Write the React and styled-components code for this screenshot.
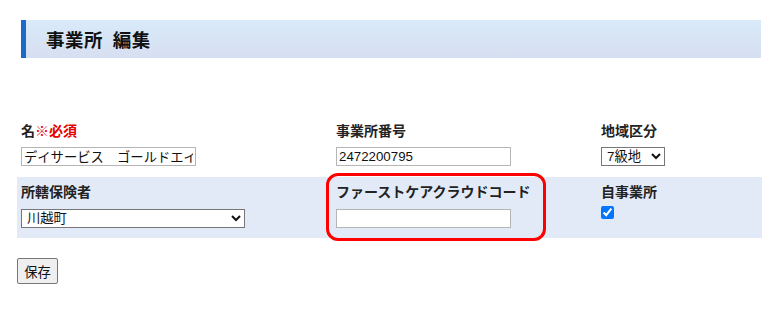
import React from "react";
import styled, { createGlobalStyle } from "styled-components";

const GlobalStyle = createGlobalStyle`
  body {
    margin: 0;
    background: #fff;
    font-family: "Noto Sans CJK JP", "Noto Sans", sans-serif;
    color: #222;
  }
`;

const Page = styled.div`
  padding: 20px 0 0 17px;
`;

const Heading = styled.h2`
  margin: 0 0 0 4px;
  width: 740px;
  height: 38px;
  box-sizing: border-box;
  border-left: 5px solid #1a6bcc;
  background: linear-gradient(to bottom, #d9eaf9, #d6dff1);
  padding-left: 20px;
  font-size: 18.5px;
  font-weight: 700;
  line-height: 38px;
  color: #111;
  letter-spacing: 0.5px;
  word-spacing: 5px;
`;

const Form = styled.div`
  margin-top: 58px;
  width: 745px;
`;

const Row = styled.div`
  display: grid;
  grid-template-columns: 315px 265px 165px;
  height: 61px;
  background: ${(p) => (p.$shaded ? "#e3eaf7" : "#fff")};
`;

const Cell = styled.div`
  position: relative;
  padding: 4px;
`;

const Label = styled.div`
  font-size: 14px;
  font-weight: 700;
  line-height: 20px;
  height: 20px;
  margin-bottom: ${(p) => p.$gap || 7}px;
  color: #222;
  white-space: nowrap;
`;

const Required = styled.span`
  color: #e60000;
`;

const TextInput = styled.input`
  display: block;
  box-sizing: border-box;
  width: ${(p) => p.$w}px;
  height: 19px;
  margin: 0;
  padding: 0 2px;
  border: 1px solid #b5b5b5;
  border-radius: 0;
  font-family: "Liberation Sans", "Noto Sans CJK JP", sans-serif;
  font-size: 13.3px;
  line-height: 17px;
  color: #111;
  background: #fff;
  outline: none;
`;

const Select = styled.select`
  display: block;
  box-sizing: border-box;
  width: ${(p) => p.$w}px;
  height: 19px;
  margin: 0;
  padding: 0 0 0 1px;
  border: 1px solid #767676;
  border-radius: 0;
  font-family: "Liberation Sans", "Noto Sans CJK JP", sans-serif;
  font-size: 13.3px;
  line-height: 17px;
  color: #111;
  background: #fff;
`;

const Check = styled.input`
  display: block;
  width: 13px;
  height: 13px;
  margin: 0;
  accent-color: #0075ff;
`;

const Highlight = styled.div`
  position: absolute;
  left: -6px;
  top: -4px;
  width: 220px;
  height: 68px;
  box-sizing: border-box;
  border: 3px solid #ff0000;
  border-radius: 12px;
  pointer-events: none;
`;

const SaveButton = styled.button`
  display: block;
  margin-top: 20px;
  width: 41px;
  height: 26px;
  padding: 0;
  border: 1px solid #767676;
  border-radius: 2px;
  background: #efefef;
  font-family: "Liberation Sans", "Noto Sans CJK JP", sans-serif;
  font-size: 13.3px;
  color: #111;
`;

export default function App() {
  return (
    <>
      <GlobalStyle />
      <Page>
        <Heading>事業所 編集</Heading>
        <Form>
          <Row>
            <Cell>
              <Label>
                名<Required>※必須</Required>
              </Label>
              <TextInput $w={175} defaultValue="デイサービス　ゴールドエイジ" />
            </Cell>
            <Cell>
              <Label>事業所番号</Label>
              <TextInput $w={175} defaultValue="2472200795" />
            </Cell>
            <Cell>
              <Label>地域区分</Label>
              <Select $w={64} defaultValue="7">
                <option value="7">7級地</option>
              </Select>
            </Cell>
          </Row>
          <Row $shaded>
            <Cell>
              <Label $gap={8}>所轄保険者</Label>
              <Select $w={224} defaultValue="kawagoe">
                <option value="kawagoe">川越町</option>
              </Select>
            </Cell>
            <Cell>
              <Label $gap={8}>ファーストケアクラウドコード</Label>
              <TextInput $w={175} defaultValue="" />
              <Highlight />
            </Cell>
            <Cell>
              <Label $gap={5}>自事業所</Label>
              <Check type="checkbox" defaultChecked />
            </Cell>
          </Row>
        </Form>
        <SaveButton>保存</SaveButton>
      </Page>
    </>
  );
}
